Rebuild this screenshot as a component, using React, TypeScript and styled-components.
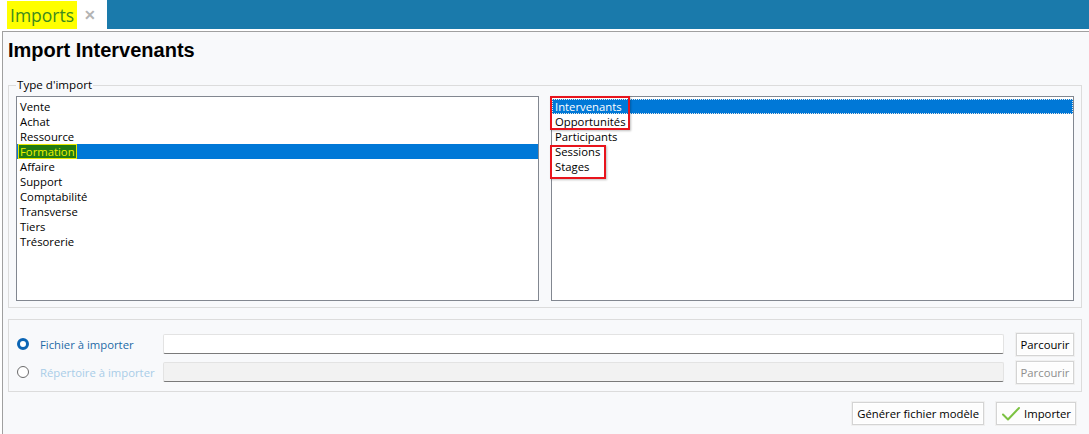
import React from "react";
import styled, { createGlobalStyle } from "styled-components";

const GlobalStyle = createGlobalStyle`
  html, body {
    margin: 0;
    padding: 0;
    background: #ffffff;
    font-family: "Open Sans", "Noto Sans", sans-serif;
    font-size: 11.3px;
    color: #000;
  }
  * { box-sizing: border-box; }
`;

const Page = styled.div`
  width: 1089px;
  height: 434px;
  display: flex;
  flex-direction: column;
  overflow: hidden;
`;

const TopBar = styled.div`
  height: 31px;
  display: flex;
  border-bottom: 2px solid #ffffff;
  flex: none;
`;

const TabArea = styled.div`
  width: 107px;
  display: flex;
  align-items: flex-end;
  padding-left: 7px;
  gap: 7px;
  background: #ffffff;
`;

const TabLabel = styled.span`
  background: #ffff00;
  color: #3d8a1e;
  font-size: 17.5px;
  height: 28px;
  line-height: 28px;
  padding: 0 3px;
`;

const TabClose = styled.span`
  color: #b3b3b3;
  font-size: 14px;
  font-weight: bold;
  line-height: 28px;
`;

const BlueFill = styled.div`
  flex: 1;
  background: #1a7aab;
`;

const Frame = styled.div`
  flex: 1;
  margin-left: 2px;
  border-left: 1px solid #a0a0a0;
  border-top: 1px solid #a0a0a0;
  background: #f8f9fb;
  display: flex;
  flex-direction: column;
  padding: 0 7px 0 5px;
`;

const Title = styled.h1`
  margin: 0;
  padding: 6px 0 0 0;
  height: 46px;
  font-family: "Liberation Sans", Arial, sans-serif;
  font-weight: bold;
  font-size: 20px;
  line-height: 24px;
  color: #000;
`;

const Group = styled.fieldset`
  margin: 0;
  min-width: 0;
  border: 1px solid #dcdcdc;
  padding: 4px 7px 6px 7px;
  display: flex;
  gap: 12px;
`;

const Legend = styled.legend`
  padding: 0 1px;
  margin-left: 0;
  font-size: 11.6px;
  line-height: 14px;
  color: #000;
`;

const ListBox = styled.div`
  position: relative;
  flex: 1;
  min-width: 0;
  height: 205px;
  background: #ffffff;
  border: 1px solid #828790;
  padding-top: 2px;
`;

const Item = styled.div<{ $selected?: boolean; $focus?: boolean }>`
  height: 15px;
  line-height: 15px;
  padding-left: 3px;
  white-space: nowrap;
  background: ${(p) => (p.$selected ? "#0078d7" : "transparent")};
  color: ${(p) => (p.$selected ? "#ffffff" : "#000000")};
  outline: ${(p) => (p.$focus ? "1px dotted #e8e8e8" : "none")};
  outline-offset: -1px;
`;

const Marked = styled.span`
  display: inline-block;
  margin-left: -2px;
  padding: 0 2px;
  background: #217a12;
  color: #eef200;
  outline: 1px solid #e8e800;
  outline-offset: -1px;
`;

const Annotation = styled.div<{ $top: number; $width: number }>`
  position: absolute;
  left: -2px;
  top: ${(p) => p.$top}px;
  width: ${(p) => p.$width}px;
  height: 34px;
  border: 2px solid #e8141c;
  box-shadow: 1px 1px 2px rgba(0, 0, 0, 0.25);
  pointer-events: none;
`;

const SourceGroup = styled.div`
  margin-top: 11px;
  border: 1px solid #dcdcdc;
  padding: 14px 7px 9px 8px;
  display: flex;
  flex-direction: column;
  gap: 8px;
`;

const SourceRow = styled.div`
  display: flex;
  align-items: center;
  height: 20px;
`;

const Radio = styled.span<{ $checked?: boolean }>`
  width: 12px;
  height: 12px;
  border-radius: 50%;
  flex: none;
  border: ${(p) => (p.$checked ? "3px solid #0a64b4" : "1px solid #6b6b6b")};
  background: #ffffff;
`;

const RadioLabel = styled.span<{ $disabled?: boolean }>`
  width: 134px;
  flex: none;
  padding-left: 11px;
  color: ${(p) => (p.$disabled ? "#a9cde8" : "#1d6aa6")};
  white-space: nowrap;
`;

const PathInput = styled.div<{ $disabled?: boolean }>`
  flex: 1;
  height: 20px;
  background: ${(p) => (p.$disabled ? "#f2f2f2" : "#ffffff")};
  border: 1px solid #e3e3e3;
  border-bottom: 1px solid #7a7a7a;
  border-radius: 2px;
`;

const Button = styled.button<{ $disabled?: boolean }>`
  height: 23px;
  padding: 0 4px;
  font-family: "Open Sans", "Noto Sans", sans-serif;
  font-size: 11.3px;
  background: #fdfdfd;
  color: ${(p) => (p.$disabled ? "#8e8e8e" : "#000000")};
  border: 1px solid #d4d4d4;
  box-shadow: inset 0 0 0 1px #ffffff, 0 0 0 1px #f0f0f0;
  border-radius: 0;
  display: inline-flex;
  align-items: center;
  gap: 3px;
  white-space: nowrap;
  cursor: default;
`;

const BrowseButton = styled(Button)`
  width: 58px;
  margin-left: 12px;
  justify-content: center;
`;

const Footer = styled.div`
  display: flex;
  justify-content: flex-end;
  gap: 12px;
  padding: 10px 6px 0 0;
`;

const Check = () => (
  <svg width="20" height="16" viewBox="0 0 20 16">
    <path d="M2 8.5 L7 13.5 L18 2" fill="none" stroke="#7cc242" strokeWidth="2" strokeLinecap="round" strokeLinejoin="round" />
  </svg>
);

const types = ["Vente", "Achat", "Ressource", "Formation", "Affaire", "Support", "Comptabilité", "Transverse", "Tiers", "Trésorerie"];
const subjects = ["Intervenants", "Opportunités", "Participants", "Sessions", "Stages"];

export default function App() {
  return (
    <Page>
      <GlobalStyle />
      <TopBar>
        <TabArea>
          <TabLabel>Imports</TabLabel>
          <TabClose>✕</TabClose>
        </TabArea>
        <BlueFill />
      </TopBar>
      <Frame>
        <Title>Import Intervenants</Title>
        <Group>
          <Legend>Type d'import</Legend>
          <ListBox>
            {types.map((t) =>
              t === "Formation" ? (
                <Item key={t} $selected>
                  <Marked>{t}</Marked>
                </Item>
              ) : (
                <Item key={t}>{t}</Item>
              )
            )}
          </ListBox>
          <ListBox>
            {subjects.map((s, i) => (
              <Item key={s} $selected={i === 0} $focus={i === 0}>
                {s}
              </Item>
            ))}
            <Annotation $top={-1} $width={80} />
            <Annotation $top={48} $width={56} />
          </ListBox>
        </Group>
        <SourceGroup>
          <SourceRow>
            <Radio $checked />
            <RadioLabel>Fichier à importer</RadioLabel>
            <PathInput />
            <BrowseButton>Parcourir</BrowseButton>
          </SourceRow>
          <SourceRow>
            <Radio />
            <RadioLabel $disabled>Répertoire à importer</RadioLabel>
            <PathInput $disabled />
            <BrowseButton $disabled>Parcourir</BrowseButton>
          </SourceRow>
        </SourceGroup>
        <Footer>
          <Button>Générer fichier modèle</Button>
          <Button>
            <Check />
            Importer
          </Button>
        </Footer>
      </Frame>
    </Page>
  );
}
